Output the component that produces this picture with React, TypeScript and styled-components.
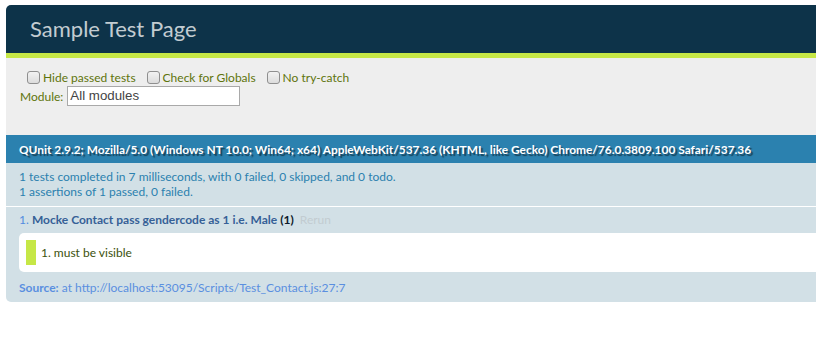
import React from 'react';
import styled, { createGlobalStyle } from 'styled-components';

const GlobalStyle = createGlobalStyle`
  html, body {
    margin: 0;
    padding: 0;
    background: #fff;
    overflow: hidden;
  }
  body {
    font-family: 'Lato', 'Liberation Sans', sans-serif;
  }
`;

const Page = styled.div`
  margin: 5px 0 0 6px;
  width: 840px;
`;

const Header = styled.h1`
  margin: 0;
  padding: 12px 0 12px 24px;
  height: 24px;
  background-color: #0d3349;
  border-radius: 5px 5px 0 0;
  font-size: 22px;
  line-height: 24px;
  font-weight: 400;
  color: #c2ccd1;
`;

const Banner = styled.div`
  height: 5px;
  background-color: #c6e746;
`;

const Toolbar = styled.div`
  box-sizing: border-box;
  height: 77px;
  padding: 10px 14px;
  background-color: #eee;
  color: #5e740b;
  font-size: 12px;
`;

const Options = styled.div`
  display: flex;
  gap: 11px;
  padding-left: 7px;
  height: 18px;
  align-items: center;
`;

const Option = styled.label`
  display: flex;
  align-items: center;
  gap: 3px;
`;

const Box = styled.span`
  box-sizing: border-box;
  width: 13px;
  height: 13px;
  border: 1px solid #8f8f8f;
  border-radius: 3px;
  background: linear-gradient(#f2f2f2, #dcdcdc);
`;

const ModuleRow = styled.div`
  display: flex;
  align-items: center;
  gap: 4px;
  height: 20px;
`;

const ModuleInput = styled.div`
  box-sizing: border-box;
  width: 173px;
  height: 20px;
  padding: 1px 2px;
  border: 1px solid #a9a9a9;
  background: #fff;
  color: #444;
  font-family: 'Liberation Sans', Arial, sans-serif;
  font-size: 13.3px;
  line-height: 16px;
`;

const UserAgent = styled.div`
  box-sizing: border-box;
  height: 28px;
  padding: 0 13px;
  display: flex;
  align-items: center;
  background-color: #2b81af;
  color: #fff;
  font-size: 11.9px;
  font-weight: 700;
  text-shadow: rgba(0, 0, 0, 0.5) 2px 2px 1px;
  white-space: nowrap;
`;

const Result = styled.div`
  box-sizing: border-box;
  height: 44px;
  padding: 6px 13px;
  background-color: #d2e0e6;
  border-bottom: 1px solid #fff;
  color: #2b81af;
  font-size: 12px;
  line-height: 15px;
`;

const TestItem = styled.div`
  box-sizing: border-box;
  height: 95px;
  padding: 5px 13px;
  background-color: #d2e0e6;
  border-radius: 0 0 5px 5px;
  color: #528ce0;
  font-size: 12px;
  line-height: 15px;
`;

const TestName = styled.strong`
  color: #366097;
  font-weight: 700;
`;

const Counts = styled.b`
  color: #0d1a2a;
`;

const Rerun = styled.span`
  margin-left: 6px;
  color: #c2ccd1;
`;

const Assertions = styled.div`
  margin-top: 6px;
  padding: 7px 7px;
  background-color: #fff;
  border-radius: 5px;
`;

const Assertion = styled.div`
  height: 25px;
  padding-left: 5px;
  display: flex;
  align-items: center;
  border-left: 10px solid #c6e746;
  color: #3c510c;
`;

const Source = styled.div`
  margin-top: 8px;
  color: #5a8fe0;
  b {
    font-weight: 700;
  }
`;

const options = ['Hide passed tests', 'Check for Globals', 'No try-catch'];

export default function App() {
  return (
    <>
      <GlobalStyle />
      <Page>
        <Header>Sample Test Page</Header>
        <Banner />
        <Toolbar>
          <Options>
            {options.map((o) => (
              <Option key={o}>
                <Box />
                {o}
              </Option>
            ))}
          </Options>
          <ModuleRow>
            Module: <ModuleInput>All modules</ModuleInput>
          </ModuleRow>
        </Toolbar>
        <UserAgent>
          QUnit 2.9.2; Mozilla/5.0 (Windows NT 10.0; Win64; x64) AppleWebKit/537.36 (KHTML, like Gecko)
          Chrome/76.0.3809.100 Safari/537.36
        </UserAgent>
        <Result>
          1 tests completed in 7 milliseconds, with 0 failed, 0 skipped, and 0 todo.
          <br />
          1 assertions of 1 passed, 0 failed.
        </Result>
        <TestItem>
          1. <TestName>Mocke Contact pass gendercode as 1 i.e. Male</TestName> <Counts>(1)</Counts>
          <Rerun>Rerun</Rerun>
          <Assertions>
            <Assertion>1. must be visible</Assertion>
          </Assertions>
          <Source>
            <b>Source:</b> at http://localhost:53095/Scripts/Test_Contact.js:27:7
          </Source>
        </TestItem>
      </Page>
    </>
  );
}
